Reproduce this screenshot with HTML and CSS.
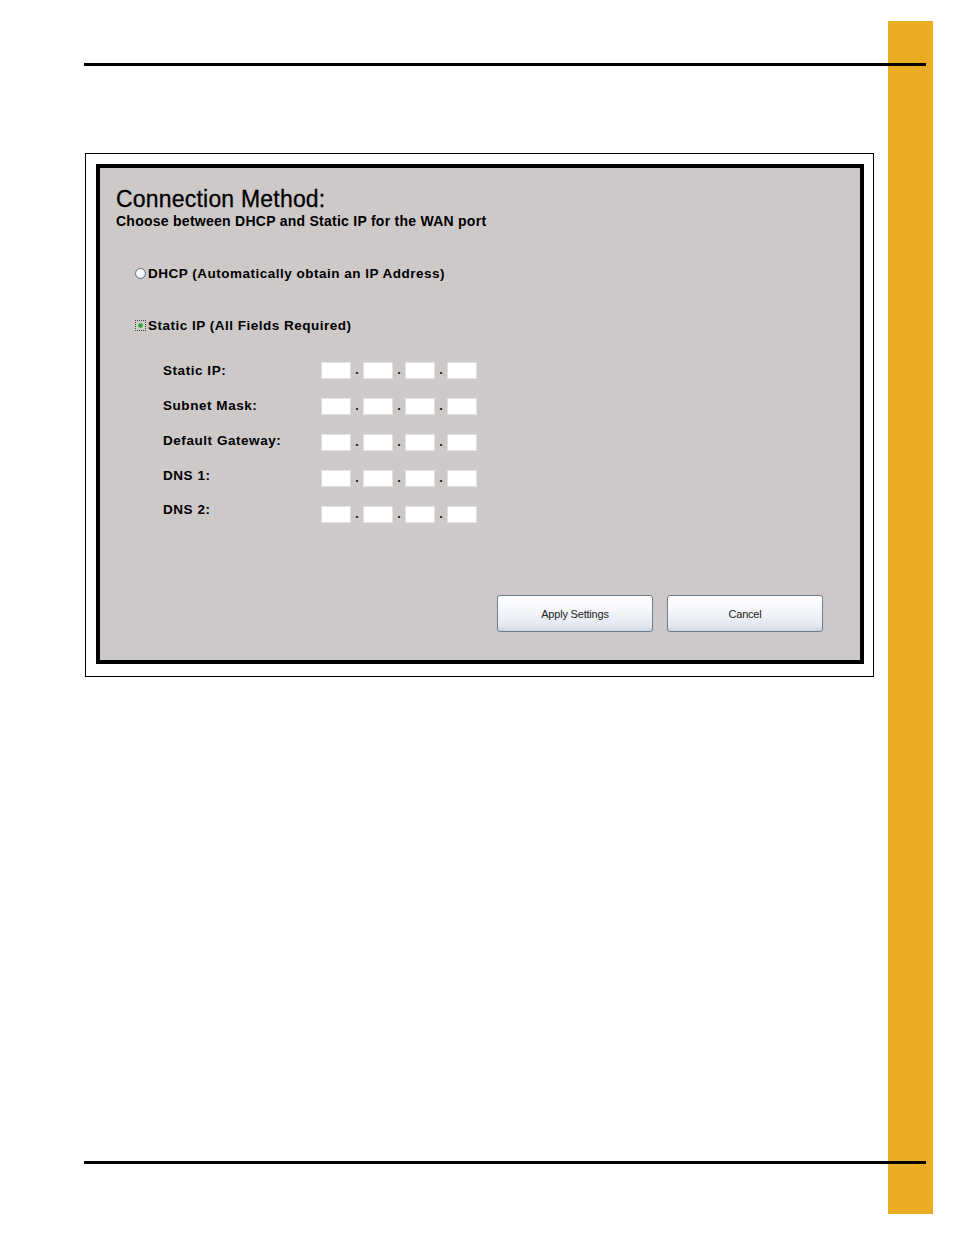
FILE: index.html
```html
<!DOCTYPE html>
<html>
<head>
<meta charset="utf-8">
<title>Connection Method</title>
<link rel="stylesheet" href="styles.css">
</head>
<body>
<div class="strip"></div>
<div class="page">
  <div class="rule rule-top"></div>
  <div class="figure">
    <div class="panel">
      <h1 class="title">Connection Method:</h1>
      <p class="subtitle">Choose between DHCP and Static IP for the WAN port</p>

      <div class="option option-dhcp">
        <span class="radio"></span>
        <span class="option-label">DHCP (Automatically obtain an IP Address)</span>
      </div>
      <div class="option option-static">
        <span class="radio-focus"><span class="radio radio-on"></span></span>
        <span class="option-label">Static IP (All Fields Required)</span>
      </div>

      <div class="fields">
        <div class="field">
          <span class="field-label">Static IP:</span>
          <span class="ip"><span class="oct"></span><span class="dot">.</span><span class="oct"></span><span class="dot">.</span><span class="oct"></span><span class="dot">.</span><span class="oct"></span></span>
        </div>
        <div class="field">
          <span class="field-label">Subnet Mask:</span>
          <span class="ip"><span class="oct"></span><span class="dot">.</span><span class="oct"></span><span class="dot">.</span><span class="oct"></span><span class="dot">.</span><span class="oct"></span></span>
        </div>
        <div class="field">
          <span class="field-label">Default Gateway:</span>
          <span class="ip"><span class="oct"></span><span class="dot">.</span><span class="oct"></span><span class="dot">.</span><span class="oct"></span><span class="dot">.</span><span class="oct"></span></span>
        </div>
        <div class="field">
          <span class="field-label">DNS 1:</span>
          <span class="ip"><span class="oct"></span><span class="dot">.</span><span class="oct"></span><span class="dot">.</span><span class="oct"></span><span class="dot">.</span><span class="oct"></span></span>
        </div>
        <div class="field">
          <span class="field-label">DNS 2:</span>
          <span class="ip"><span class="oct"></span><span class="dot">.</span><span class="oct"></span><span class="dot">.</span><span class="oct"></span><span class="dot">.</span><span class="oct"></span></span>
        </div>
      </div>

      <div class="buttons">
        <span class="btn">Apply Settings</span>
        <span class="btn">Cancel</span>
      </div>
    </div>
  </div>
  <div class="spacer"></div>
  <div class="rule rule-bottom"></div>
</div>
</body>
</html>
```

FILE: styles.css
```css
html, body {
  margin: 0;
  padding: 0;
  background: #ffffff;
}

body {
  position: relative;
  width: 954px;
  height: 1235px;
  overflow: hidden;
  font-family: "Liberation Sans", Arial, sans-serif;
  color: #000;
}

.strip {
  position: absolute;
  left: 888px;
  top: 21px;
  width: 45px;
  height: 1193px;
  background: #eaac22;
}

.page {
  position: relative;
  padding-left: 84px;
  width: 842px;
}

.rule {
  height: 3px;
  background: #000;
}

.rule-top {
  margin-top: 63px;
}

.figure {
  margin-top: 87px;
  margin-left: 1px;
  width: 789px;
  height: 524px;
  box-sizing: border-box;
  border: 1px solid #000;
  padding: 10px 0 0 10px;
}

.panel {
  width: 768px;
  height: 500px;
  box-sizing: border-box;
  border: 4px solid #000;
  background: #cdc9c8;
  padding: 19px 0 0 16px;
  display: flex;
  flex-direction: column;
}

.title {
  margin: 0;
  font-size: 23px;
  line-height: 24px;
  font-weight: normal;
  letter-spacing: 0.2px;
  -webkit-text-stroke: 0.3px #000;
}

.subtitle {
  margin: 0;
  margin-top: 2px;
  font-size: 14px;
  line-height: 16px;
  font-weight: bold;
  letter-spacing: 0.26px;
}

.option {
  display: flex;
  align-items: center;
  margin-left: 19px;
  height: 16px;
}

.option-dhcp {
  margin-top: 36px;
}

.option-static {
  margin-top: 36px;
}

.option-label {
  font-size: 13.5px;
  font-weight: bold;
  letter-spacing: 0.5px;
  margin-left: 2px;
}

.radio {
  display: inline-block;
  width: 9px;
  height: 9px;
  border-radius: 50%;
  border: 1px solid #5d7290;
  background: radial-gradient(circle at 40% 40%, #ffffff 0%, #eef2f7 60%, #cdd7e4 100%);
}

.radio-focus {
  display: inline-flex;
  align-items: center;
  justify-content: center;
  width: 11px;
  height: 11px;
  box-sizing: border-box;
  border: 1px dotted #444;
}

.radio-on {
  width: 7px;
  height: 7px;
  border: none;
  background: radial-gradient(circle, #2f9a34 0%, #3aa43e 35%, #bfe0bf 60%, #f4f8f4 100%);
}

.fields {
  margin-top: 19px;
  margin-left: 47px;
  display: flex;
  flex-direction: column;
}

.field {
  display: flex;
  align-items: center;
  height: 36px;
}

.field-label {
  width: 158px;
  font-size: 13.5px;
  font-weight: bold;
  letter-spacing: 0.55px;
  position: relative;
  top: 0;
}

.field:nth-child(2) .field-label { top: -1px; }
.field:nth-child(3) .field-label { top: -2px; }
.field:nth-child(4) .field-label { top: -3px; }
.field:nth-child(5) .field-label { top: -5px; }

.ip {
  display: flex;
  align-items: stretch;
}

.oct {
  width: 30px;
  height: 17px;
  box-sizing: border-box;
  background: #fff;
  border: 1px solid #e2e0e0;
}

.dot {
  width: 12px;
  height: 17px;
  text-align: center;
  font-size: 13px;
  font-weight: bold;
  line-height: 16px;
  color: #111;
}

.buttons {
  display: flex;
  gap: 14px;
  justify-content: flex-end;
  margin-top: auto;
  margin-bottom: 28px;
  margin-right: 37px;
}

.btn {
  width: 156px;
  height: 37px;
  box-sizing: border-box;
  border: 1px solid #6f7d92;
  border-radius: 3px;
  background: linear-gradient(#ffffff 0%, #f3f5fa 45%, #e3e7f0 85%, #cfd5e2 100%);
  display: flex;
  align-items: center;
  justify-content: center;
  font-size: 11px;
  color: #222;
  letter-spacing: -0.2px;
}

.spacer {
  height: 484px;
}

.rule-bottom {
  height: 3px;
}
```
